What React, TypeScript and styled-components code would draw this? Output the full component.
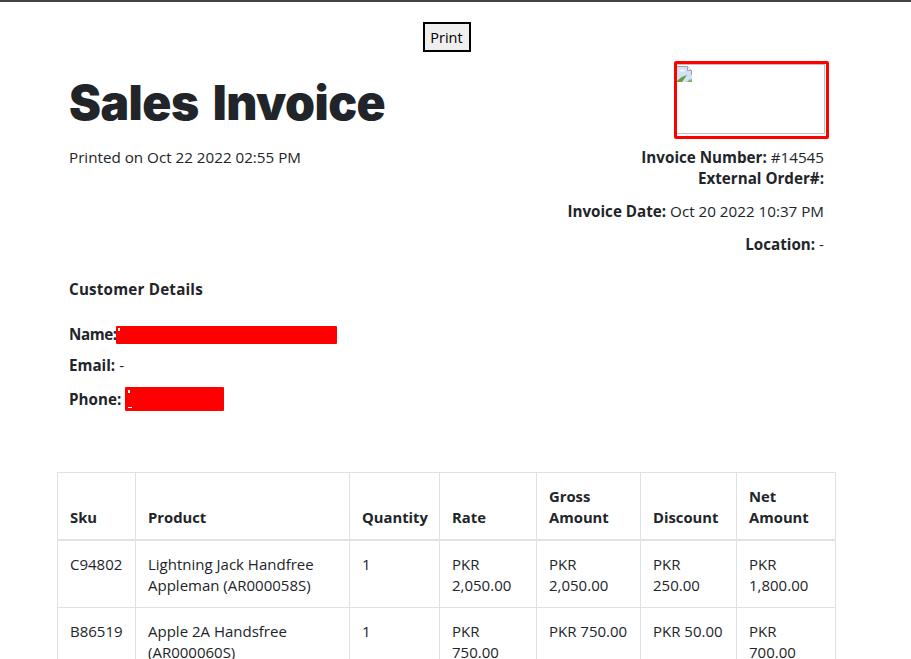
import * as React from 'react';
import styled, { createGlobalStyle } from 'styled-components';

const GlobalStyle = createGlobalStyle`
  html, body {
    margin: 0;
    height: 659px;
    overflow: hidden;
    background: #fff;
  }
  body {
    font-family: "Open Sans", "Noto Sans", "Liberation Sans", sans-serif;
    font-size: 15.2px;
    line-height: 21px;
    color: #212529;
  }
`;

const Page = styled.div`
  border-top: 2px solid #444;
  height: 657px;
  overflow: hidden;
`;

const PrintRow = styled.div`
  display: flex;
  justify-content: center;
  padding: 20px 18px 0 0;
  height: 39px;
`;

const PrintButton = styled.button`
  width: 48px;
  height: 30px;
  padding: 0;
  border: 2px solid #000;
  background: #efefef;
  color: #000;
  font: inherit;
  font-size: 14.5px;
`;

const Container = styled.div`
  width: 755px;
  margin-left: 69px;
`;

const HeaderRow = styled.div`
  display: flex;
  justify-content: space-between;
  align-items: flex-start;
`;

const Title = styled.h1`
  margin: 0;
  padding-top: 9px;
  font-family: "Inter", "Open Sans", sans-serif;
  font-size: 48px;
  line-height: 66px;
  font-weight: 900;
  letter-spacing: -0.5px;
  word-spacing: 5px;
`;

const Printed = styled.p`
  margin: 11px 0 0;
`;

const InvoiceMeta = styled.div`
  display: flex;
  flex-direction: column;
  align-items: flex-end;
`;

const LogoFrame = styled.div`
  box-sizing: border-box;
  width: 155px;
  height: 78px;
  margin-right: -5px;
  padding: 0 1px 2px 0;
  border: 3px solid #f00;
  border-radius: 2px;
`;

const BrokenImage = styled.div`
  height: 70px;
  box-sizing: border-box;
  border: 1px solid #c0c0c0;
  border-left: 0;
  padding-top: 1px;
  display: flex;
  align-items: flex-start;
`;

const MetaLine = styled.div<{ $gap?: number }>`
  margin-top: ${(p) => p.$gap ?? 0}px;
  text-align: right;
`;

const Label = styled.b<{ $tight?: boolean }>`
  font-weight: 700;
  letter-spacing: ${(p) => (p.$tight ? '-0.4px' : 'normal')};
`;

const CustomerHeading = styled.div`
  margin-top: 24px;
  font-weight: 700;
  letter-spacing: 0.2px;
`;

const CustomerLine = styled.div<{ $gap: number; $height?: number }>`
  margin-top: ${(p) => p.$gap}px;
  height: ${(p) => p.$height ?? 21}px;
  display: flex;
  align-items: center;
`;

const Redaction = styled.span<{ $width: number; $height: number; $left: number }>`
  position: relative;
  display: inline-block;
  width: ${(p) => p.$width}px;
  height: ${(p) => p.$height}px;
  margin-left: ${(p) => p.$left}px;
  background: #f00;
  border-radius: 1px;
`;

const Speck = styled.i<{ $x: number; $y: number; $w: number; $h: number }>`
  position: absolute;
  left: ${(p) => p.$x}px;
  top: ${(p) => p.$y}px;
  width: ${(p) => p.$w}px;
  height: ${(p) => p.$h}px;
  background: #fff;
`;

const Table = styled.table`
  width: 779px;
  margin: 61px 0 0 57px;
  table-layout: fixed;
  border-collapse: collapse;
`;

const Th = styled.th`
  padding: 13px 12px 11px;
  border: 1px solid #dee2e6;
  border-bottom-width: 2px;
  text-align: left;
  vertical-align: bottom;
  font-size: 14.8px;
  font-weight: 700;
`;

const Td = styled.td`
  padding: 13px 12px 11px;
  border: 1px solid #dee2e6;
  vertical-align: top;
  font-size: 15px;
`;

const columns = [78, 214, 90, 97, 104, 96, 99];

const headings = ['Sku', 'Product', 'Quantity', 'Rate', 'Gross Amount', 'Discount', 'Net Amount'];

const rows = [
  ['C94802', 'Lightning Jack Handfree Appleman (AR000058S)', '1', 'PKR 2,050.00', 'PKR 2,050.00', 'PKR 250.00', 'PKR 1,800.00'],
  ['B86519', 'Apple 2A Handsfree (AR000060S)', '1', 'PKR 750.00', 'PKR 750.00', 'PKR 50.00', 'PKR 700.00'],
];

const BrokenIcon = () => (
  <svg width="16" height="16" viewBox="0 0 16 16">
    <path d="M0 0h10l5 5v11H0z" fill="#d4e0fa" />
    <path d="M0 .5h10.5l4 4V9M14.5 13v2.5H12" fill="none" stroke="#a0a0a0" />
    <path d="M10.5 .5v4h4" fill="#f4f4f4" stroke="#a0a0a0" />
    <path d="M2 5c2-2 4-2 6 0-2 1-4 1-6 0z" fill="#fff" />
    <path d="M0 16v-1c3-3 6-5 10-6l-5 7z" fill="#5aa832" />
    <path d="M10 16l3-3 2 3z" fill="#7fb35f" />
  </svg>
);

export default function App() {
  return (
    <Page>
      <GlobalStyle />
      <PrintRow>
        <PrintButton>Print</PrintButton>
      </PrintRow>
      <Container>
        <HeaderRow>
          <div>
            <Title>Sales Invoice</Title>
            <Printed>Printed on Oct 22 2022 02:55 PM</Printed>
          </div>
          <InvoiceMeta>
            <LogoFrame>
              <BrokenImage>
                <BrokenIcon />
              </BrokenImage>
            </LogoFrame>
            <MetaLine $gap={8}>
              <Label>Invoice Number:</Label> #14545
            </MetaLine>
            <MetaLine>
              <Label>External Order#:</Label>
            </MetaLine>
            <MetaLine $gap={12}>
              <Label>Invoice Date:</Label> Oct 20 2022 10:37 PM
            </MetaLine>
            <MetaLine $gap={12}>
              <Label>Location:</Label> -
            </MetaLine>
          </InvoiceMeta>
        </HeaderRow>
        <CustomerHeading>Customer Details</CustomerHeading>
        <CustomerLine $gap={24}>
          <Label $tight>Name:</Label>
          <Redaction $width={221} $height={18} $left={-1}>
            <Speck $x={2} $y={2} $w={2} $h={3} />
          </Redaction>
        </CustomerLine>
        <CustomerLine $gap={10}>
          <Label>Email:</Label>&nbsp;-
        </CustomerLine>
        <CustomerLine $gap={11} $height={24}>
          <Label>Phone:</Label>
          <Redaction $width={99} $height={24} $left={4}>
            <Speck $x={3} $y={3} $w={2} $h={3} />
            <Speck $x={3} $y={20} $w={4} $h={1} />
          </Redaction>
        </CustomerLine>
      </Container>
      <Table>
        <colgroup>
          {columns.map((w, i) => (
            <col key={i} width={w} />
          ))}
        </colgroup>
        <thead>
          <tr>
            {headings.map((h) => (
              <Th key={h}>{h}</Th>
            ))}
          </tr>
        </thead>
        <tbody>
          {rows.map((row) => (
            <tr key={row[0]}>
              {row.map((cell, i) => (
                <Td key={i}>{cell}</Td>
              ))}
            </tr>
          ))}
        </tbody>
      </Table>
    </Page>
  );
}
